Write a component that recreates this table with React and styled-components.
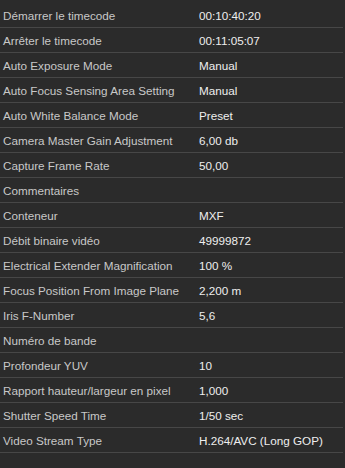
import React from "react";
import styled, { createGlobalStyle } from "styled-components";

const Global = createGlobalStyle`
  html, body { margin: 0; padding: 0; background: #2b2b2b; }
  body { width: 345px; height: 468px; overflow: hidden; }
`;

const Panel = styled.div`
  width: 345px;
  height: 468px;
  box-sizing: border-box;
  padding-top: 3px;
  background: #2b2b2b;
  font-family: "Liberation Sans", Arial, sans-serif;
  font-size: 11.7px;
`;

const Row = styled.div`
  display: grid;
  grid-template-columns: 196px 1fr;
  height: 24px;
  align-items: center;
  border-bottom: 1px solid #474747;
  margin-right: 2px;
`;

const Label = styled.span`
  padding-left: 3px;
  color: #c8c8c8;
  white-space: nowrap;
  overflow: hidden;
`;

const Value = styled.span`
  padding-left: 3px;
  color: #eeeeee;
  white-space: nowrap;
`;

const rows = [
  ["Démarrer le timecode", "00:10:40:20"],
  ["Arrêter le timecode", "00:11:05:07"],
  ["Auto Exposure Mode", "Manual"],
  ["Auto Focus Sensing Area Setting", "Manual"],
  ["Auto White Balance Mode", "Preset"],
  ["Camera Master Gain Adjustment", "6,00 db"],
  ["Capture Frame Rate", "50,00"],
  ["Commentaires", ""],
  ["Conteneur", "MXF"],
  ["Débit binaire vidéo", "49999872"],
  ["Electrical Extender Magnification", "100 %"],
  ["Focus Position From Image Plane", "2,200 m"],
  ["Iris F-Number", "5,6"],
  ["Numéro de bande", ""],
  ["Profondeur YUV", "10"],
  ["Rapport hauteur/largeur en pixel", "1,000"],
  ["Shutter Speed Time", "1/50 sec"],
  ["Video Stream Type", "H.264/AVC (Long GOP)"],
];

export default function App() {
  return (
    <>
      <Global />
      <Panel>
        {rows.map(([k, v]) => (
          <Row key={k}>
            <Label>{k}</Label>
            <Value>{v}</Value>
          </Row>
        ))}
      </Panel>
    </>
  );
}
